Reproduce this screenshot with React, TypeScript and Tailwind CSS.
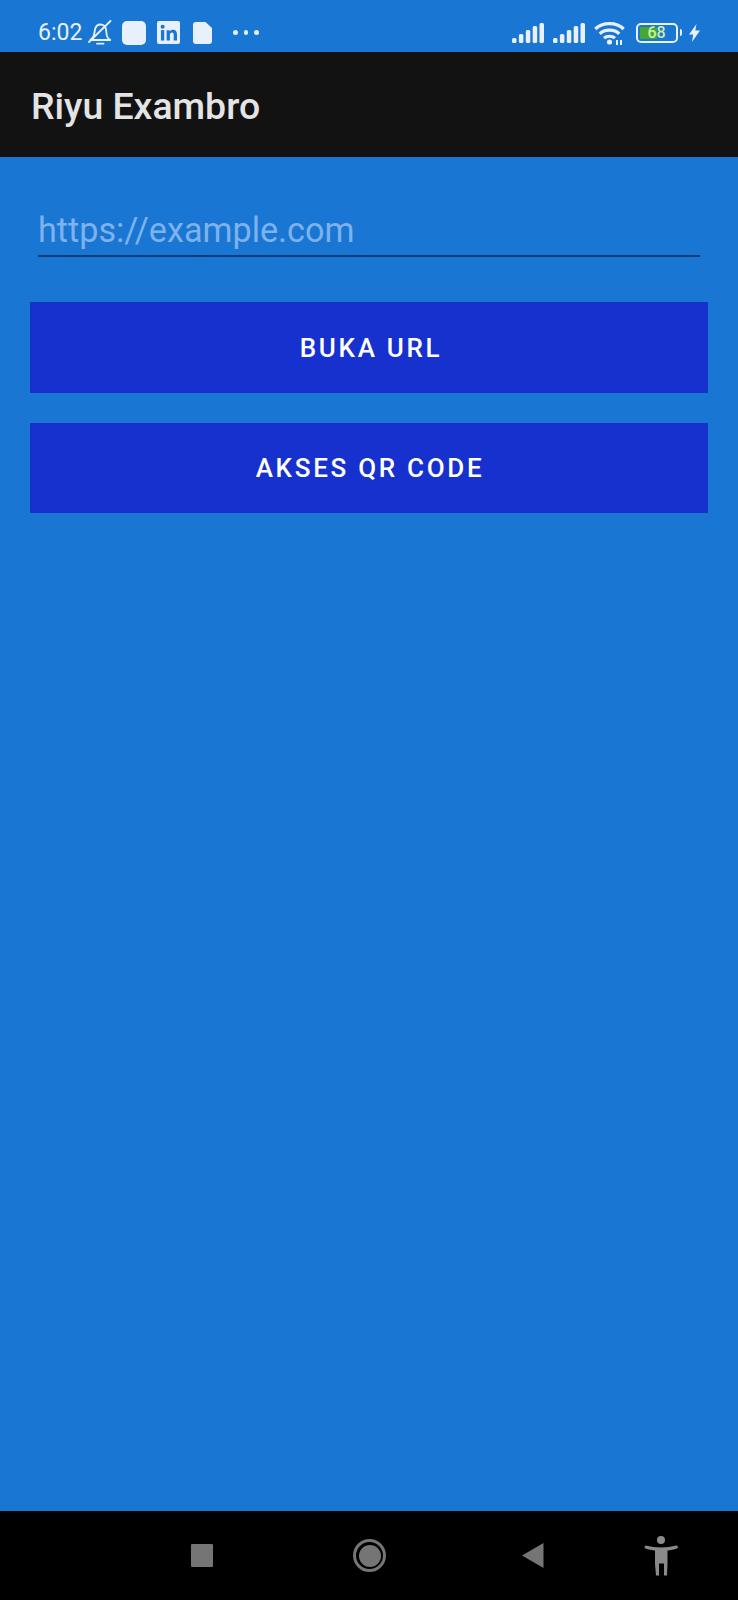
import React from 'react';

const Signal = () => (
  <svg width="32" height="20" viewBox="0 0 32 20" fill="#e8f0fb">
    <rect x="0" y="15" width="4.500" height="5" rx="1.500" />
    <rect x="6.900" y="11" width="4.500" height="9" rx="1.500" />
    <rect x="13.800" y="7" width="4.500" height="13" rx="1.500" />
    <rect x="20.700" y="3" width="4.500" height="17" rx="1.500" />
    <rect x="27.500" y="0" width="4.500" height="20" rx="1.500" />
  </svg>
);

const StatusBar = () => (
  <div className="h-[52px] flex items-center justify-between pl-[38px] pr-[38px] pt-[13px] text-[#e8f0fb]">
    <div className="flex items-center">
      <span className="text-[23px] leading-none font-['Roboto',sans-serif] w-[50px]">6:02</span>
      <svg width="24" height="25" viewBox="0 0 24 25" fill="none" stroke="#e8f0fb" strokeWidth="1.800">
        <path d="M2 20c2.500-1 3.500-2.500 4-5l1-5.500c.6-3 2.500-5 5.500-5s5.200 2.200 5.500 5l.8 6c.3 2 1.700 3.500 4 4.500z" />
        <path d="M9 23.700h6.500M1 22L22.500 1" strokeLinecap="round" />
      </svg>
      <div className="w-[24px] h-[24px] rounded-[5px] bg-[#e8f0fb] ml-[10px]" />
      <div className="w-[23px] h-[23px] rounded-[2px] bg-[#e8f0fb] ml-[11px] flex items-center justify-center">
        <svg width="17" height="17" viewBox="0 0 18 18" fill="#1976d2">
          <rect x="1" y="6.500" width="3.500" height="11" />
          <circle cx="2.800" cy="2.800" r="2.100" />
          <path d="M7 6.500h3.300v1.500c.7-1.100 2-1.800 3.400-1.800 3 0 4.300 1.800 4.300 4.800v6.500h-3.500v-6c0-1.500-.5-2.400-1.800-2.400s-2.200 1-2.200 2.500v5.900H7z" />
        </svg>
      </div>
      <svg width="19" height="22" viewBox="0 0 19 22" fill="#e8f0fb" className="ml-[13px]">
        <path d="M3 0h9.500L19 6v13a3 3 0 0 1-3 3H3a3 3 0 0 1-3-3V3a3 3 0 0 1 3-3z" />
      </svg>
      <div className="flex gap-[6px] ml-[21px]">
        <div className="w-[4.500px] h-[4.500px] rounded-full bg-[#e8f0fb]" />
        <div className="w-[4.500px] h-[4.500px] rounded-full bg-[#e8f0fb]" />
        <div className="w-[4.500px] h-[4.500px] rounded-full bg-[#e8f0fb]" />
      </div>
    </div>
    <div className="flex items-center">
      <Signal />
      <div className="ml-[9px]"><Signal /></div>
      <svg width="31" height="24" viewBox="0 0 31 24" fill="none" stroke="#e8f0fb" strokeWidth="3.200" className="ml-[9px]">
        <path d="M1.300 8C8.500 .8 22.500 .8 29.700 8" />
        <path d="M5.800 12.800c4.800-4.800 14.600-4.800 19.400 0" />
        <path d="M10 17.200c2.800-2.600 8.200-2.600 11 0" />
        <circle cx="15.500" cy="21" r="2.600" fill="#e8f0fb" stroke="none" />
        <path d="M23 24v-5M27 24v-5" strokeWidth="2" />
      </svg>
      <div className="ml-[11px] w-[42px] h-[20px] rounded-[5px] border-2 border-[#e8f0fb] p-[2px] relative">
        <div className="w-[17px] h-full bg-[#46a82e] rounded-[1px]" />
        <span className="absolute inset-0 flex items-center justify-center text-[16px] leading-none font-medium text-[#c8f0a8] font-['Roboto',sans-serif]">68</span>
      </div>
      <div className="w-[2.500px] h-[7px] bg-[#e8f0fb] rounded-r-[2px] ml-[2px]" />
      <svg width="11" height="18" viewBox="0 0 11 18" fill="#e8f0fb" className="ml-[7px]">
        <path d="M7.500 0L0 10.500h4.200L3 18l8-11.500H6.300z" />
      </svg>
    </div>
  </div>
);

const NavBar = () => (
  <div className="h-[89px] bg-black relative flex items-center shrink-0">
    <div className="absolute left-[191px] top-[33px] w-[22px] h-[23px] bg-[#757575] rounded-[1px]" />
    <div className="absolute left-[353px] top-[28px] w-[33px] h-[33px] rounded-full border-[3px] border-[#757575] flex items-center justify-center">
      <div className="w-[22px] h-[22px] rounded-full bg-[#757575]" />
    </div>
    <svg width="22" height="25" viewBox="0 0 22 25" fill="#757575" className="absolute left-[522px] top-[32px]">
      <path d="M21.500 0v25L0 12.500z" />
    </svg>
    <svg width="34" height="40" viewBox="0 0 34 40" fill="#8a8a8a" className="absolute left-[644px] top-[25px]">
      <circle cx="17" cy="4" r="4" />
      <path d="M1.500 9.500c10 2.500 21 2.500 31 0 1.500 0 2 2.500.5 3-3 1-6.500 1.700-9.500 2V28l-.5 11.500h-3V27.500h-5v12h-3L11 28V14.500c-3-.3-6.500-1-9.500-2-1.500-.5-1-3 .5-3z" />
    </svg>
  </div>
);

export default function App() {
  return (
    <div className="w-[738px] h-[1600px] bg-[#1976d2] flex flex-col font-['Roboto',sans-serif]">
      <StatusBar />
      <div className="h-[105px] bg-[#121212] flex items-center pl-[31px] pt-[5px] shrink-0">
        <span className="text-[37.400px] font-medium text-[#e4e4e4] leading-none">Riyu Exambro</span>
      </div>
      <div className="flex-1 px-[30px] pt-[51px] flex flex-col">
        <div className="mx-[8px] h-[49px] border-b-2 border-[#0d3c75] flex items-center pb-[3px]">
          <span className="text-[34.200px] leading-none text-[#7db2ec]">https://example.com</span>
        </div>
        <button className="mt-[45px] h-[90.500px] bg-[#1731ce] text-white text-[26px] font-medium tracking-[2.700px] pl-[4px] pt-[3px]">BUKA URL</button>
        <button className="mt-[30px] h-[90.500px] bg-[#1731ce] text-white text-[26px] font-medium tracking-[2.700px] pl-[2px] pt-[2px]">AKSES QR CODE</button>
      </div>
      <NavBar />
    </div>
  );
}
